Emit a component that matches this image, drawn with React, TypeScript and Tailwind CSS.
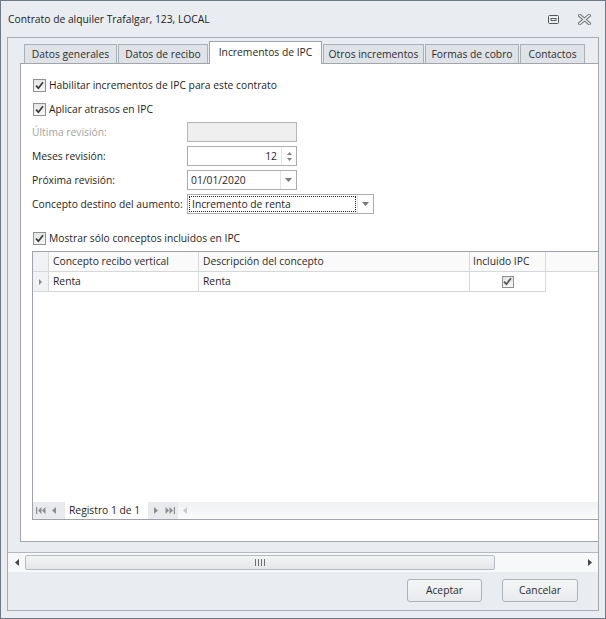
import React from 'react';

function Check({ small = false }: { small?: boolean }) {
  const s = small ? 'h-[12px] w-[12px]' : 'h-[13px] w-[13px]';
  return (
    <span className={`${s} shrink-0 inline-flex items-center justify-center border border-[#8f9092] bg-linear-to-b from-[#e4e5e6] to-[#f7f7f7]`}>
      <svg width="9" height="9" viewBox="0 0 9 9">
        <path d="M1 4.6 L3.4 7.2 L8 1.2" stroke={small ? '#555' : '#3b3b3b'} strokeWidth="1.7" fill="none" />
      </svg>
    </span>
  );
}

function DownArrow() {
  return (
    <svg width="7" height="4" viewBox="0 0 7 4">
      <path d="M0 0 H7 L3.5 4 Z" fill="#777" />
    </svg>
  );
}

function DropBtn() {
  return (
    <div className="w-[16px] h-full border-l border-[#e1e2e4] flex items-center justify-center">
      <DownArrow />
    </div>
  );
}

function Row({ label, disabled = false, mt, children }: { label: string; disabled?: boolean; mt: string; children: React.ReactNode }) {
  return (
    <div className={`flex items-center h-[20px] ${mt}`}>
      <span className={`w-[155px] ${disabled ? 'text-[#a3a3a3]' : ''}`}>{label}</span>
      {children}
    </div>
  );
}

function Tab({ label, w, active = false }: { label: string; w: string; active?: boolean }) {
  if (active) {
    return (
      <div className={`${w} h-[23px] -mb-px relative z-10 bg-white border-t border-x border-[#a0a5ac] flex items-center justify-center text-[#1e1e1e] pb-[2px]`}>
        {label}
      </div>
    );
  }
  return (
    <div className={`${w} h-[19px] bg-[#dfe3e8] border-t border-x border-[#aab0b7] flex items-center justify-center text-[#2c2c2c] pt-[1px]`}>
      {label}
    </div>
  );
}

function NavTri({ dir, color = '#8d8d8d' }: { dir: 'l' | 'r'; color?: string }) {
  return (
    <svg width="4" height="7" viewBox="0 0 4 7">
      {dir === 'l' ? <path d="M4 0 V7 L0 3.5 Z" fill={color} /> : <path d="M0 0 V7 L4 3.5 Z" fill={color} />}
    </svg>
  );
}

function NavEnd({ dir }: { dir: 'l' | 'r' }) {
  return (
    <svg width="10" height="7" viewBox="0 0 10 7">
      {dir === 'l' ? (
        <g fill="#8d8d8d">
          <rect x="0" y="0" width="1.2" height="7" />
          <path d="M5.5 0 V7 L2 3.5 Z" />
          <path d="M9.5 0 V7 L6 3.5 Z" />
        </g>
      ) : (
        <g fill="#8d8d8d">
          <path d="M0.5 0 V7 L4 3.5 Z" />
          <path d="M4.5 0 V7 L8 3.5 Z" />
          <rect x="8.8" y="0" width="1.2" height="7" />
        </g>
      )}
    </svg>
  );
}

export default function App() {
  return (
    <div className="w-[606px] h-[619px] overflow-hidden bg-[#e9ecf0] border border-[#6f7984] flex flex-col font-['Open_Sans',sans-serif] text-[10.3px] leading-none text-[#1e1e1e]">
      {/* Title bar */}
      <div className="h-[36px] shrink-0 flex items-center pl-[7px] pr-[14px]">
        <span className="flex-1 text-[#222]">Contrato de alquiler Trafalgar, 123, LOCAL</span>
        <svg width="11" height="9" viewBox="0 0 11 9" className="mr-[19px]">
          <rect x="0.5" y="0.5" width="10" height="8" rx="1" fill="none" stroke="#555" />
          <rect x="3" y="3.5" width="5" height="2" fill="none" stroke="#555" strokeWidth="0.9" />
        </svg>
        <svg width="13" height="11" viewBox="0 0 13 11">
          <path d="M1.8 1.5 L11.2 9.5 M11.2 1.5 L1.8 9.5" stroke="#6a6a6a" strokeWidth="3.4" strokeLinecap="square" />
          <path d="M1.8 1.5 L11.2 9.5 M11.2 1.5 L1.8 9.5" stroke="#e9ecf0" strokeWidth="1.6" strokeLinecap="square" />
        </svg>
      </div>

      {/* Frame */}
      <div className="flex-1 min-h-0 mx-[6px] mb-[7px] border border-[#a6abb2] flex flex-col">
        <div className="h-[514px] shrink-0 overflow-hidden pl-[12px] pt-[3px]">
          <div className="flex items-end h-[22px] pl-[4px] gap-[1px]">
            <Tab label="Datos generales" w="w-[93px]" />
            <Tab label="Datos de recibo" w="w-[90px]" />
            <Tab label="Incrementos de IPC" w="w-[113px]" active />
            <Tab label="Otros incrementos" w="w-[101px]" />
            <Tab label="Formas de cobro" w="w-[94px]" />
            <Tab label="Contactos" w="w-[65px]" />
          </div>
          <div className="w-[600px] h-[479px] bg-white border-t border-l border-b border-[#a0a5ac] flex flex-col pl-[11px]">
            <div className="flex items-center h-[20px] mt-[11px] pl-[1px] gap-[3px]">
              <Check />
              <span>Habilitar incrementos de IPC para este contrato</span>
            </div>
            <div className="flex items-center h-[20px] mt-[4px] pl-[1px] gap-[3px]">
              <Check />
              <span>Aplicar atrasos en IPC</span>
            </div>
            <Row label="Última revisión:" disabled mt="mt-[3px]">
              <div className="w-[110px] h-[20px] border border-[#b4b6b9] bg-[#efefef]" />
            </Row>
            <Row label="Meses revisión:" mt="mt-[4px]">
              <div className="w-[110px] h-[20px] border border-[#abadb3] bg-white flex">
                <div className="flex-1 flex items-center justify-end pr-[4px]">12</div>
                <div className="w-[15px] h-full border-l border-[#e1e2e4] flex flex-col items-center justify-center gap-[3px]">
                  <svg width="5" height="3" viewBox="0 0 5 3"><path d="M0 3 H5 L2.5 0 Z" fill="#808080" /></svg>
                  <svg width="5" height="3" viewBox="0 0 5 3"><path d="M0 0 H5 L2.5 3 Z" fill="#808080" /></svg>
                </div>
              </div>
            </Row>
            <Row label="Próxima revisión:" mt="mt-[4px]">
              <div className="w-[110px] h-[20px] border border-[#abadb3] bg-white flex">
                <div className="flex-1 flex items-center pl-[3px]">01/01/2020</div>
                <DropBtn />
              </div>
            </Row>
            <Row label="Concepto destino del aumento:" mt="mt-[4px]">
              <div className="w-[187px] h-[20px] border border-[#abadb3] bg-white flex">
                <div className="flex-1 p-[1px]">
                  <div className="h-full border border-dotted border-[#222] flex items-center pl-[2px]">Incremento de renta</div>
                </div>
                <DropBtn />
              </div>
            </Row>
            <div className="flex items-center h-[20px] mt-[14px] pl-[1px] gap-[3px]">
              <Check />
              <span>Mostrar sólo conceptos incluidos en IPC</span>
            </div>

            {/* Grid */}
            <div className="mt-[3px] w-[580px] h-[269px] border border-[#a0a4aa] flex flex-col">
              <div className="flex h-[20px] border-b border-[#d5d7da] bg-[#fafafa]">
                <div className="w-[16px] border-r border-[#d5d7da] bg-[#f1f2f3]" />
                <div className="w-[150px] border-r border-[#d5d7da] flex items-center pl-[4px] text-[#2a2a2a]">Concepto recibo vertical</div>
                <div className="w-[271px] border-r border-[#d5d7da] flex items-center pl-[4px] text-[#2a2a2a]">Descripción del concepto</div>
                <div className="w-[76px] border-r border-[#d5d7da] flex items-center pl-[3px] text-[#2a2a2a]">Incluido IPC</div>
                <div className="flex-1" />
              </div>
              <div className="flex h-[20px]">
                <div className="w-[16px] border-r border-b border-[#d5d7da] bg-[#f1f2f3] flex items-center justify-center">
                  <svg width="3" height="6" viewBox="0 0 3 6"><path d="M0 0 V6 L3 3 Z" fill="#8a8a8a" /></svg>
                </div>
                <div className="w-[150px] border-r border-b border-[#d5d7da] flex items-center pl-[4px]">Renta</div>
                <div className="w-[271px] border-r border-b border-[#d5d7da] flex items-center pl-[4px]">Renta</div>
                <div className="w-[76px] border-r border-b border-[#d5d7da] flex items-center justify-center">
                  <Check small />
                </div>
              </div>
              <div className="flex-1" />
              <div className="h-[17px] flex bg-linear-to-b from-[#eef0f2] to-[#fbfbfc]">
                <div className="w-[32px] bg-[#e8eaed] flex items-center gap-[6px] pl-[3px]">
                  <NavEnd dir="l" />
                  <NavTri dir="l" />
                </div>
                <div className="w-[83px] bg-white flex items-center pl-[4px]">Registro 1 de 1</div>
                <div className="w-[30px] bg-[#e8eaed] flex items-center gap-[7px] pl-[6px]">
                  <NavTri dir="r" />
                  <NavEnd dir="r" />
                </div>
                <div className="flex items-center pl-[5px]">
                  <NavTri dir="l" color="#c8c8c8" />
                </div>
              </div>
            </div>
          </div>
        </div>

        {/* Horizontal scrollbar */}
        <div className="h-[20px] shrink-0 border-t border-[#b4b9bf] bg-[#f7f8f9] flex items-center">
          <div className="w-[17px] flex justify-center">
            <svg width="4" height="7" viewBox="0 0 4 7"><path d="M4 0 V7 L0 3.5 Z" fill="#444" /></svg>
          </div>
          <div className="w-[470px] h-[15px] rounded-[2px] border border-[#b6bac0] bg-linear-to-b from-[#f3f4f5] to-[#e5e7ea] flex items-center justify-center gap-[2px]">
            <span className="w-px h-[7px] bg-[#6f6f6f]" />
            <span className="w-px h-[7px] bg-[#6f6f6f]" />
            <span className="w-px h-[7px] bg-[#6f6f6f]" />
            <span className="w-px h-[7px] bg-[#6f6f6f]" />
          </div>
          <div className="flex-1" />
          <div className="w-[17px] flex justify-center">
            <svg width="4" height="7" viewBox="0 0 4 7"><path d="M0 0 V7 L4 3.5 Z" fill="#444" /></svg>
          </div>
        </div>

        {/* Buttons */}
        <div className="flex-1 flex justify-end items-start pt-[7px] pr-[20px] gap-[20px]">
          <button className="w-[75px] h-[23px] rounded-[3px] border border-[#adb2b9] bg-linear-to-b from-[#f5f6f7] to-[#e8eaed] text-[#2a2a2a]">Aceptar</button>
          <button className="w-[76px] h-[23px] rounded-[3px] border border-[#adb2b9] bg-linear-to-b from-[#f5f6f7] to-[#e8eaed] text-[#2a2a2a]">Cancelar</button>
        </div>
      </div>
    </div>
  );
}
